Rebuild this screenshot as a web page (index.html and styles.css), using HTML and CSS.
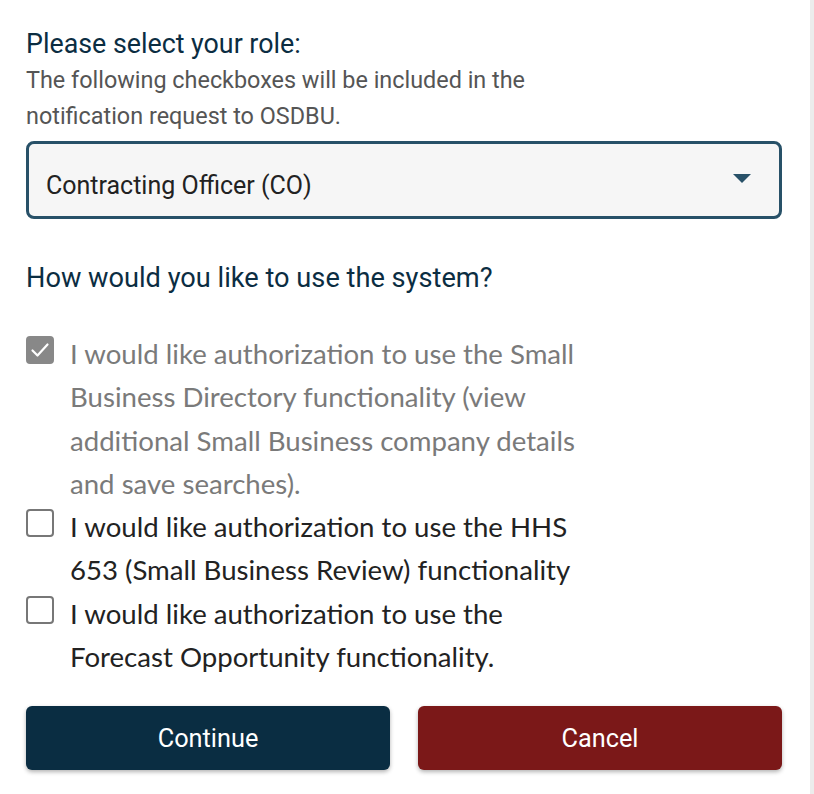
FILE: index.html
```html
<!DOCTYPE html>
<html>
<head>
<meta charset="utf-8">
<link rel="stylesheet" href="styles.css">
</head>
<body>
<div class="panel">
  <div class="content">
    <h2 class="title">Please select your role:</h2>
    <p class="hint">The following checkboxes will be included in the<br>notification request to OSDBU.</p>
    <div class="select">
      <span class="select-value">Contracting Officer (CO)</span>
      <span class="caret"></span>
    </div>
    <h2 class="title title-2">How would you like to use the system?</h2>
    <ul class="options">
      <li class="option disabled">
        <span class="box checked">
          <svg viewBox="0 0 28 28" width="28" height="28"><path d="M6.5 14.5 L11.5 19.5 L21.5 8.5" fill="none" stroke="#fff" stroke-width="2.2" stroke-linecap="round" stroke-linejoin="round"/></svg>
        </span>
        <span class="label">I would like authorization to use the Small Business Directory functionality (view additional Small Business company details and save searches).</span>
      </li>
      <li class="option">
        <span class="box"></span>
        <span class="label">I would like authorization to use the HHS 653 (Small Business Review) functionality</span>
      </li>
      <li class="option">
        <span class="box"></span>
        <span class="label">I would like authorization to use the Forecast Opportunity functionality.</span>
      </li>
    </ul>
    <div class="actions">
      <button class="btn btn-primary">Continue</button>
      <button class="btn btn-danger">Cancel</button>
    </div>
  </div>
</div>
</body>
</html>
```

FILE: styles.css
```css
html, body {
  margin: 0;
  padding: 0;
  background: #fff;
}
.panel {
  width: 810px;
  height: 794px;
  border-right: 4px solid #ececec;
  box-sizing: content-box;
}
.content {
  width: 756px;
  padding: 26px 0 0 26px;
  font-family: Roboto, "Liberation Sans", sans-serif;
}
.title {
  margin: 0;
  font-size: 26.8px;
  font-weight: 400;
  line-height: 36px;
  color: #0b2d42;
}
.hint {
  margin: 0;
  font-size: 23.4px;
  line-height: 36px;
  color: #555;
}
.select {
  margin-top: 7px;
  height: 78px;
  box-sizing: border-box;
  border: 3px solid #285168;
  border-radius: 8px;
  background: #f6f6f6;
  display: flex;
  align-items: center;
  justify-content: space-between;
  padding: 0 28px 0 17px;
}
.select-value {
  font-size: 25px;
  color: #222;
  margin-top: 10px;
}
.caret {
  width: 0;
  height: 0;
  border-left: 9px solid transparent;
  border-right: 9px solid transparent;
  border-top: 9px solid #285168;
  margin-top: -3px;
}
.title-2 {
  margin-top: 41px;
  font-size: 27.2px;
}
.options {
  list-style: none;
  margin: 36px 0 0 0;
  padding: 0;
  font-family: Lato, "Open Sans", sans-serif;
}
.option {
  display: flex;
  align-items: flex-start;
  gap: 16px;
  font-size: 27.6px;
  line-height: 43.3px;
  color: #222;
  width: 562px;
}
.option.disabled {
  color: #7a7a7a;
}
.box {
  flex: none;
  width: 28px;
  height: 28px;
  box-sizing: border-box;
  border: 2.5px solid #777;
  border-radius: 4px;
  margin-top: 4px;
  background: #fff;
}
.box.checked {
  background: #888;
  border-color: #888;
  display: flex;
  align-items: center;
  justify-content: center;
}
.box.checked svg {
  flex: none;
}
.actions {
  display: flex;
  gap: 28px;
  margin-top: 28px;
}
.btn {
  flex: 1;
  height: 64px;
  border: none;
  border-radius: 6px;
  color: #fff;
  font-family: Roboto, "Liberation Sans", sans-serif;
  font-size: 25.3px;
  box-shadow: 0 2px 4px rgba(0,0,0,0.3);
}
.btn-primary {
  background: #0a2d42;
}
.btn-danger {
  background: #7b1818;
}
```
